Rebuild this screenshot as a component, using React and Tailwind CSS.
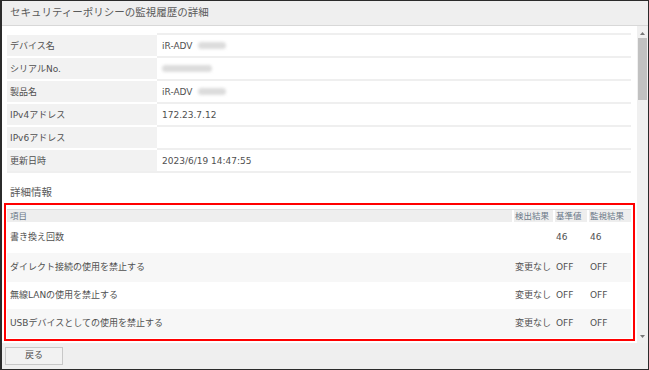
import React from "react";

const Blur = ({ w = "w-[28px]", ml = "ml-[5px]" }) => (
  <span className={`inline-block ${w} ${ml} h-[7px] bg-[#dcdcdc] rounded-full blur-[1.5px] align-middle`} />
);

const infoRows = [
  { label: "デバイス名", value: <><span>iR-ADV</span><Blur /></> },
  { label: "シリアルNo.", value: <Blur w="w-[50px]" ml="ml-[0px]" /> },
  { label: "製品名", value: <><span>iR-ADV</span><Blur /></> },
  { label: "IPv4アドレス", value: "172.23.7.12" },
  { label: "IPv6アドレス", value: "" },
  { label: "更新日時", value: "2023/6/19 14:47:55" },
];

const detailRows = [
  { name: "書き換え回数", det: "", base: "46", mon: "46", h: "h-[31px]", bg: "bg-white" },
  { name: "ダイレクト接続の使用を禁止する", det: "変更なし", base: "OFF", mon: "OFF", h: "h-[29px]", bg: "bg-[#f7f7f7]" },
  { name: "無線LANの使用を禁止する", det: "変更なし", base: "OFF", mon: "OFF", h: "h-[27px]", bg: "bg-white" },
  { name: "USBデバイスとしての使用を禁止する", det: "変更なし", base: "OFF", mon: "OFF", h: "h-[29px]", bg: "bg-[#f7f7f7]" },
];

export default function App() {
  return (
    <div className="w-[649px] h-[370px] flex flex-col border border-[#2b2b2b] border-l-2 bg-white overflow-hidden font-['DejaVu_Sans','Noto_Sans_CJK_JP',sans-serif] text-[#505050]">
      {/* header */}
      <div className="h-[25px] shrink-0 bg-[#efefef] border-b border-[#d8d8d8] flex items-center pl-[8px] text-[10.5px] text-[#5a5a5a]">
        セキュリティーポリシーの監視履歴の詳細
      </div>

      {/* content */}
      <div className="h-[317px] shrink-0 flex">
        <div className="flex-1 overflow-hidden pt-[7px]">
          {/* info table */}
          <div className="ml-[5px] mr-[6px] border-b-2 border-[#efefef]">
            {infoRows.map((r, i) => (
              <div key={i} className="flex h-[23px]">
                <div className="w-[150px] bg-[#f2f2f2] border-t-2 border-white flex items-center pl-[3px] text-[9px] leading-[12px]">
                  {r.label}
                </div>
                <div className="flex-1 border-t-2 border-[#efefef] flex items-center pl-[5px] text-[9px] leading-[12px]">
                  {r.value}
                </div>
              </div>
            ))}
          </div>

          <div className="mt-[11px] ml-[8px] text-[10.5px] leading-[16px] text-[#5a5a5a]">詳細情報</div>

          {/* detail table in red box */}
          <div className="mt-[3px] ml-[2px] mr-[2px] border-2 border-[#ff0000] pt-[4px] pl-[1px] pr-[2px] pb-[1px]">
            <div className="flex h-[13px] bg-[#eeeeee] border-t border-[#dedede] text-[8.5px] text-[#6a7888] leading-[12px]">
              <div className="flex-1 pl-[3px] flex items-center">項目</div>
              <div className="w-[41px] border-l-2 border-white pl-[1px] flex items-center">検出結果</div>
              <div className="w-[34px] border-l-2 border-white pl-[1px] flex items-center">基準値</div>
              <div className="w-[44px] border-l-2 border-white pl-[1px] flex items-center">監視結果</div>
            </div>
            {detailRows.map((r, i) => (
              <div key={i} className={`flex items-center text-[9px] leading-[12px] ${r.h} ${r.bg}`}>
                <div className="flex-1 pl-[3px] -mt-[1px]">{r.name}</div>
                <div className="w-[41px] pl-[3px] -mt-[1px]">{r.det}</div>
                <div className="w-[34px] pl-[3px] -mt-[1px]">{r.base}</div>
                <div className="w-[44px] pl-[3px] -mt-[1px]">{r.mon}</div>
              </div>
            ))}
          </div>
        </div>

        {/* scrollbar */}
        <div className="w-[11px] shrink-0 bg-[#f0f0f0] relative">
          <svg className="absolute left-[3px] top-[6px]" width="5" height="3" viewBox="0 0 5 3">
            <polygon points="2.5,0 5,3 0,3" fill="#777" />
          </svg>
          <div className="absolute left-[1px] top-[12px] w-[9px] h-[62px] bg-[#c1c1c1]" />
          <svg className="absolute left-[3px] bottom-[5px]" width="5" height="3" viewBox="0 0 5 3">
            <polygon points="0,0 5,0 2.5,3" fill="#777" />
          </svg>
        </div>
      </div>

      {/* footer */}
      <div className="flex-1 bg-[#efefef] flex items-start pt-[4px] pl-[3px]">
        <button className="w-[58px] h-[18px] bg-[#f2f2f2] border border-[#c8c8c8] text-[9px] text-[#505050] flex items-center justify-center">
          戻る
        </button>
      </div>
    </div>
  );
}
